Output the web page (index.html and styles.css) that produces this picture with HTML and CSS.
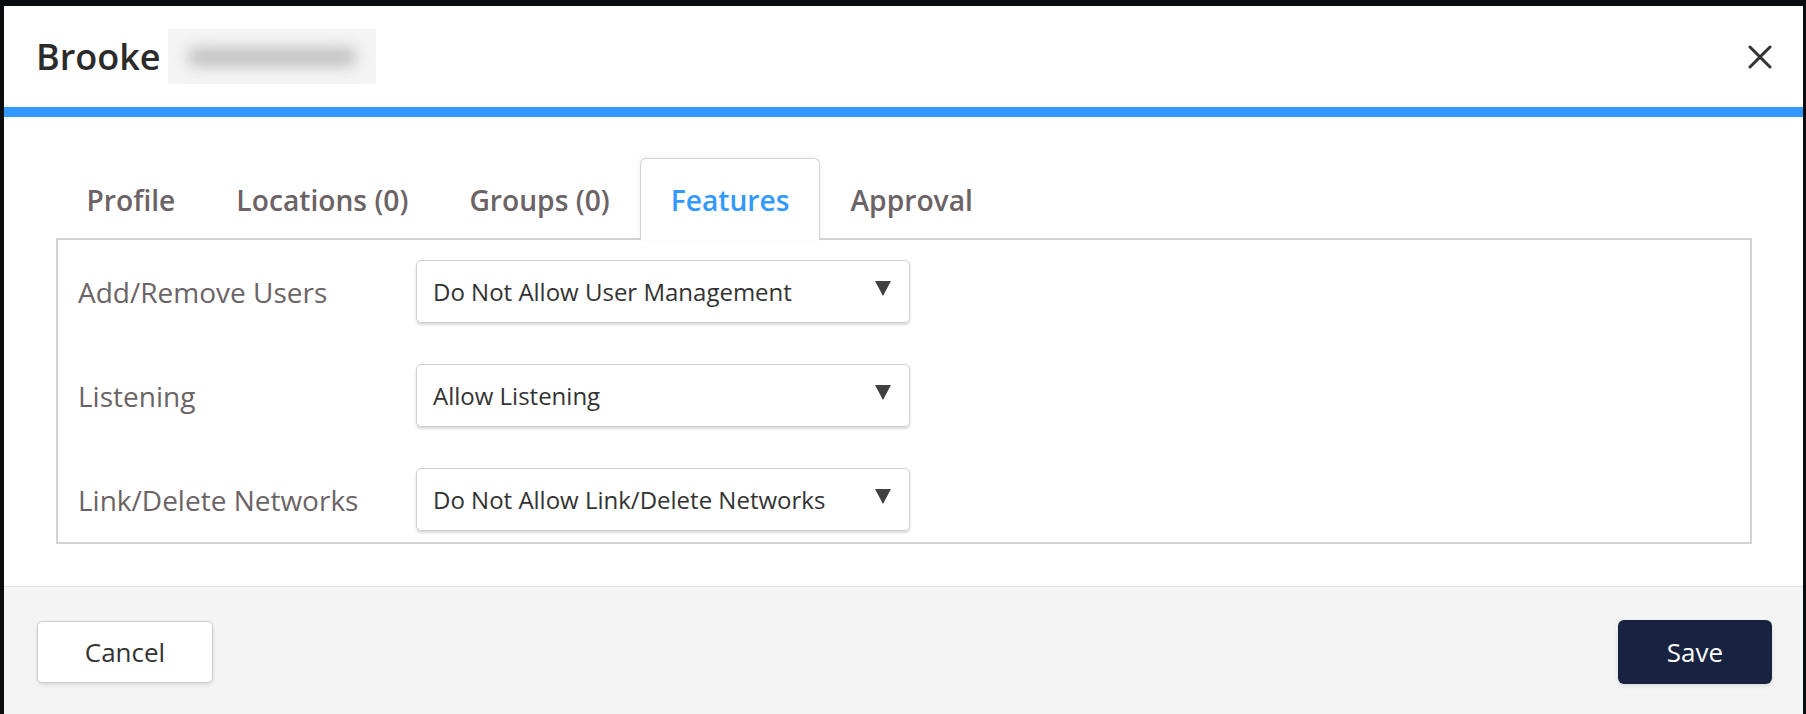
FILE: index.html
```html
<!DOCTYPE html>
<html lang="en">
<head>
    <meta charset="UTF-8">
    <meta name="viewport" content="width=device-width, initial-scale=1.0">
    <title>Edit User</title>
    <link rel="stylesheet" href="styles.css">
</head>
<body>

    <div class="modal">
        <header class="modal-header">
            <h1 class="title">Brooke<span class="name-blur"><span class="blur"></span></span></h1>
            <button class="close" aria-label="Close">
                <svg width="24" height="24" viewBox="0 0 24 24">
                    <path d="M2 2 L22 22 M22 2 L2 22" stroke="#333" stroke-width="3" stroke-linecap="round" fill="none"/>
                </svg>
            </button>
        </header>

        <section class="modal-body">
            <nav class="tabs">
                <div class="tab">Profile</div>
                <div class="tab">Locations (0)</div>
                <div class="tab">Groups (0)</div>
                <div class="tab active">Features</div>
                <div class="tab">Approval</div>
            </nav>

            <div class="panel">
                <div class="row">
                    <label class="label">Add/Remove Users</label>
                    <div class="select">
                        <span>Do Not Allow User Management</span>
                        <svg class="arrow" width="16" height="15" viewBox="0 0 16 15"><path d="M0 0 H16 L8 15 Z" fill="#404040"/></svg>
                    </div>
                </div>
                <div class="row">
                    <label class="label">Listening</label>
                    <div class="select">
                        <span>Allow Listening</span>
                        <svg class="arrow" width="16" height="15" viewBox="0 0 16 15"><path d="M0 0 H16 L8 15 Z" fill="#404040"/></svg>
                    </div>
                </div>
                <div class="row">
                    <label class="label">Link/Delete Networks</label>
                    <div class="select">
                        <span>Do Not Allow Link/Delete Networks</span>
                        <svg class="arrow" width="16" height="15" viewBox="0 0 16 15"><path d="M0 0 H16 L8 15 Z" fill="#404040"/></svg>
                    </div>
                </div>
            </div>
        </section>

        <footer class="modal-footer">
            <button class="btn btn-cancel">Cancel</button>
            <button class="btn btn-save">Save</button>
        </footer>
    </div>

</body>
</html>
```

FILE: styles.css
```css
body {
    font-family: "Open Sans", "Noto Sans", sans-serif;
    margin: 0;
    padding: 6px 3px 0 4px;
    background-color: #0b0b12;
    height: 714px;
    box-sizing: border-box;
    overflow: hidden;
}

.modal {
    background-color: white;
    height: 708px;
    display: flex;
    flex-direction: column;
}

.modal-header {
    height: 101px;
    border-bottom: 10px solid #3399ff;
    display: flex;
    align-items: center;
    justify-content: space-between;
    padding: 0 31px 0 32px;
}

.title {
    margin: 0;
    font-size: 36px;
    font-weight: 600;
    color: #2b2b2b;
    display: flex;
    align-items: center;
}

.name-blur {
    width: 208px;
    height: 55px;
    margin-left: 7px;
    background-color: #f4f4f4;
    display: flex;
    align-items: center;
    justify-content: center;
    overflow: hidden;
}

.blur {
    width: 170px;
    height: 20px;
    border-radius: 10px;
    background-color: #c4c4c4;
    filter: blur(7px);
}

.close {
    background: none;
    border: none;
    padding: 0;
    cursor: pointer;
    display: flex;
}

.modal-body {
    padding: 41px 51px 42px 52px;
}

.tabs {
    display: flex;
    margin-bottom: -2px;
    position: relative;
    z-index: 1;
}

.tab {
    padding: 22px 29.5px 21px;
    border: 1px solid transparent;
    border-bottom: none;
    font-size: 28.2px;
    font-weight: 600;
    line-height: 38px;
    color: #6b6365;
}

.tab.active {
    background-color: white;
    border-color: #d2d2d2;
    border-radius: 6px 6px 0 0;
    color: #3399ff;
    box-shadow: 0 -1px 6px rgba(0, 0, 0, 0.06);
}

.panel {
    border: 2px solid #d3d3d3;
    padding: 20px 20px 11px;
    display: flex;
    flex-direction: column;
    gap: 41px;
}

.row {
    display: flex;
    align-items: center;
}

.label {
    width: 338px;
    font-size: 28px;
    color: #6b6466;
}

.select {
    width: 494px;
    height: 63px;
    box-sizing: border-box;
    border: 1px solid #cfcfcf;
    border-radius: 5px;
    padding: 0 18px 0 16px;
    display: flex;
    align-items: center;
    justify-content: space-between;
    font-size: 24px;
    color: #333;
    box-shadow: 0 2px 3px rgba(0, 0, 0, 0.15);
}

.arrow {
    margin-top: -6px;
}

.modal-footer {
    flex: 1;
    border-top: 1px solid #e2e2e2;
    background-color: #f4f4f4;
    padding: 34px 31px 0 33px;
    display: flex;
    justify-content: space-between;
    align-items: flex-start;
}

.btn {
    font-family: "Open Sans", "Noto Sans", sans-serif;
    font-size: 26px;
    border-radius: 5px;
    cursor: pointer;
}

.btn-cancel {
    width: 176px;
    height: 62px;
    background-color: white;
    color: #333;
    border: 1px solid #cccccc;
    box-shadow: 0 2px 4px rgba(0, 0, 0, 0.1);
}

.btn-save {
    width: 154px;
    height: 64px;
    margin-top: -1px;
    background-color: #172340;
    color: white;
    border: none;
    border-radius: 6px;
    box-shadow: 0 2px 4px rgba(0, 0, 0, 0.1);
}
```
